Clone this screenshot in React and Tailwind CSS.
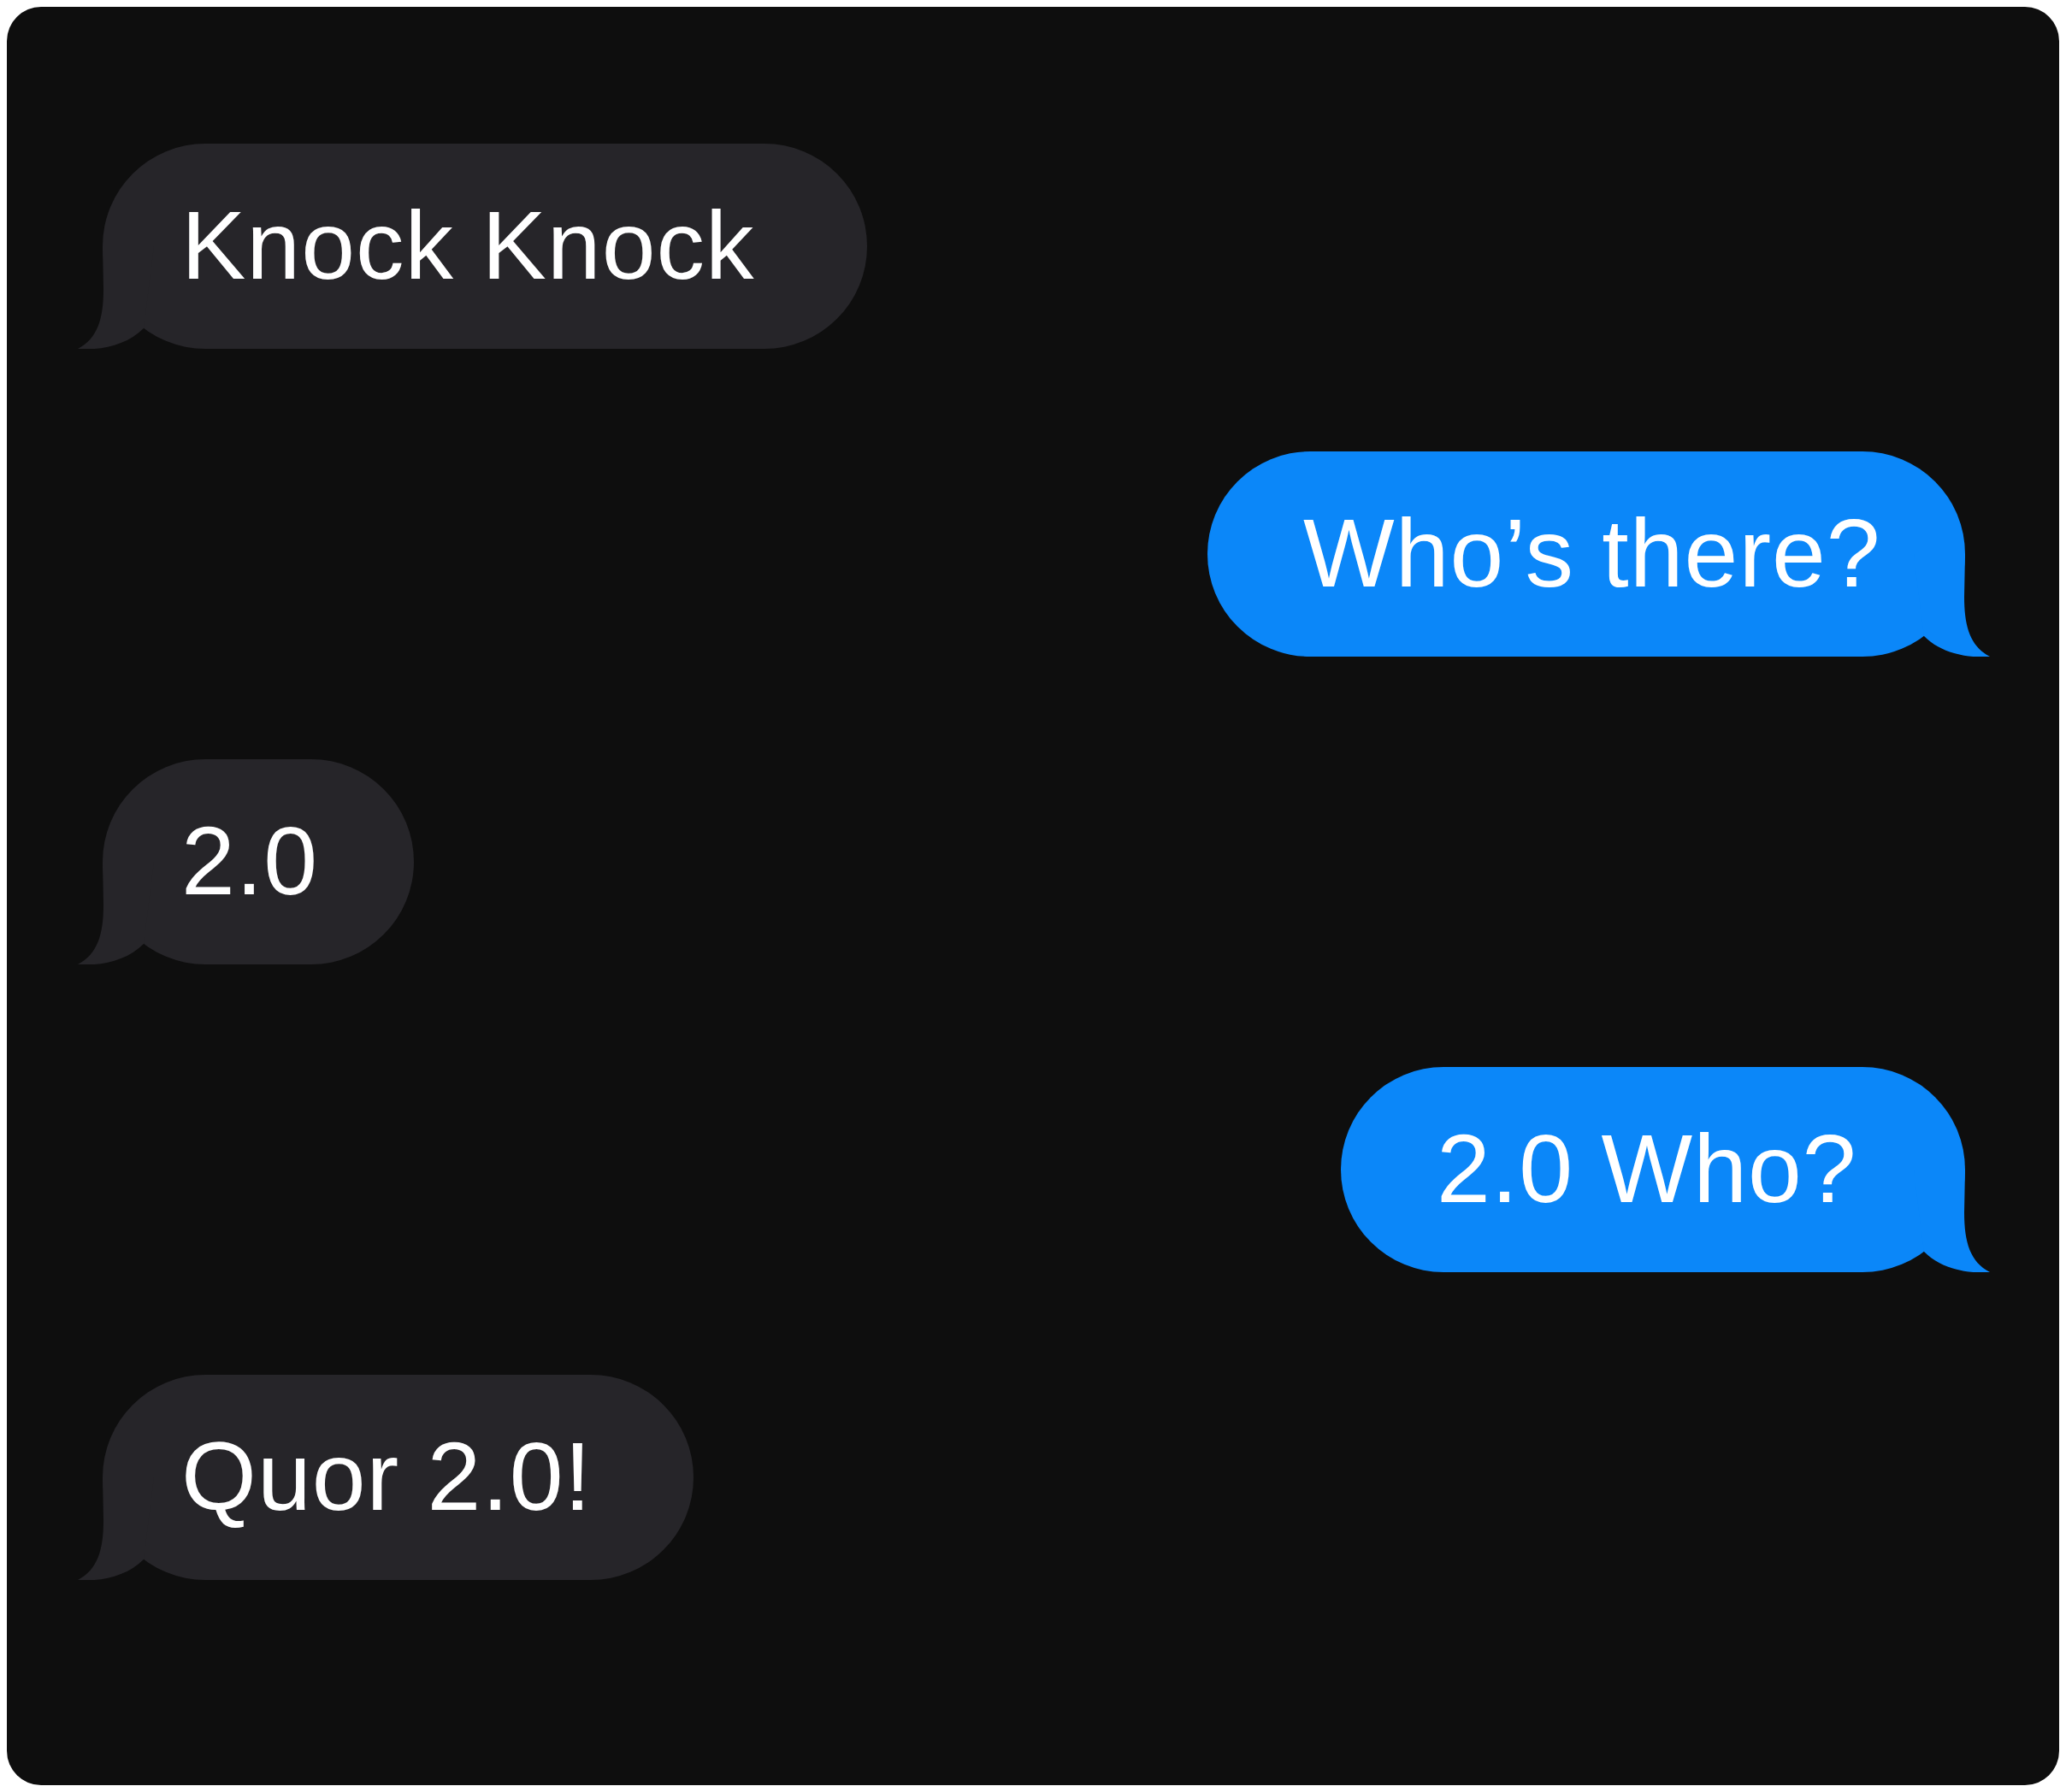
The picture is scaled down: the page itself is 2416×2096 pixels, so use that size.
import React from "react";

// widths taken straight off the mockup so the bubbles line up with it
const messages = [
  { text: "Knock Knock", fromMe: false, width: "w-[894px]" },
  { text: "Who’s there?", fromMe: true, width: "w-[886px]" },
  { text: "2.0", fromMe: false, width: "w-[364px]" },
  { text: "2.0 Who?", fromMe: true, width: "w-[730px]" },
  { text: "Quor 2.0!", fromMe: false, width: "w-[691px]" },
];

// little curled tail drawn in the bubble's own coordinates (body left edge = 0, bottom = 240)
function Tail({ color, mirrored }) {
  return (
    <svg
      className={`absolute bottom-0 ${mirrored ? "right-[-30px] -scale-x-100" : "left-[-30px]"}`}
      width="90"
      height="120"
      viewBox="-30 120 90 120"
    >
      <path
        d="M 0 120 L 1 170 C 1 205 -6 228 -29 240 C -2 242 28 236 48 216 L 60 120 Z"
        fill={color}
      />
    </svg>
  );
}

function Bubble({ text, fromMe, width }) {
  const color = fromMe ? "#0b87f9" : "#262529";
  return (
    <div
      className={`relative h-[240px] flex items-center rounded-full whitespace-nowrap text-white text-[113px] tracking-[1px] ${width} ${
        fromMe ? "self-end bg-[#0b87f9] pl-[112px]" : "self-start bg-[#262529] pl-[92px]"
      }`}
    >
      <Tail color={color} mirrored={fromMe} />
      <span className="relative">{text}</span>
    </div>
  );
}

export default function App() {
  return (
    <div className="min-h-screen bg-white p-2 font-['Liberation_Sans',Arial,sans-serif]">
      <div className="w-[2400px] h-[2080px] rounded-[40px] bg-[#0e0e0e] pt-[160px] pl-[112px] pr-[110px] flex flex-col gap-[120px]">
        {messages.map((m, i) => (
          <Bubble key={i} {...m} />
        ))}
      </div>
    </div>
  );
}
